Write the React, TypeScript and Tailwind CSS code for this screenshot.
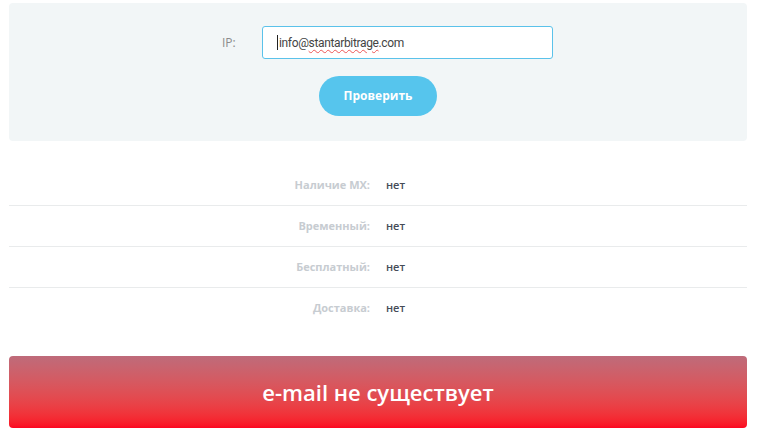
import React from 'react';

const rows = [
  { label: 'Наличие MX:', value: 'нет' },
  { label: 'Временный:', value: 'нет' },
  { label: 'Бесплатный:', value: 'нет' },
  { label: 'Доставка:', value: 'нет' },
];

export default function App() {
  return (
    <div className="w-[762px] h-[447px] bg-white pl-[9px] pt-[3px] font-['Open_Sans',sans-serif]">
      <div className="w-[738px]">
        {/* Check form */}
        <div className="bg-[#f2f6f7] rounded-[4px] pt-[23px] pb-[25px] flex flex-col items-center">
          <div className="w-full flex items-center pl-[213px]">
            <span className="text-[12px] text-[#8c8c8c] w-[40px]">IP:</span>
            <div className="w-[291px] h-[33px] bg-white border border-[#5bc2ea] rounded-[3px] flex items-center pl-[14px] font-['Roboto',sans-serif] text-[12px] tracking-[-0.35px] text-[#444]">
              <span className="w-px h-[15px] bg-[#222] mr-px" />
              info@
              <span className="underline decoration-wavy decoration-[#e55] decoration-1 underline-offset-2">stantarbitrage</span>
              .com
            </div>
          </div>
          <button className="mt-[17px] w-[118px] h-[40px] rounded-full bg-[#56c5ed] text-white text-[12px] font-bold">
            Проверить
          </button>
        </div>

        {/* Results */}
        <div className="mt-[24px]">
          {rows.map((r, i) => (
            <div
              key={r.label}
              className={
                'grid grid-cols-2 h-[41px] items-center text-[11px] ' +
                (i < rows.length - 1 ? 'border-b border-[#e9ebec]' : '')
              }
            >
              <span className="text-right pr-[8px] font-bold text-[#c7ccd1]">{r.label}</span>
              <span className="pl-[8px] font-semibold text-[#454b57]">{r.value}</span>
            </div>
          ))}
        </div>

        {/* Status */}
        <div className="mt-[27px] h-[72px] rounded-[4px] bg-gradient-to-b from-[#be6b7a] to-[#fc0420] flex items-center justify-center">
          <span className="text-white text-[22px] font-semibold">e-mail не существует</span>
        </div>
      </div>
    </div>
  );
}
